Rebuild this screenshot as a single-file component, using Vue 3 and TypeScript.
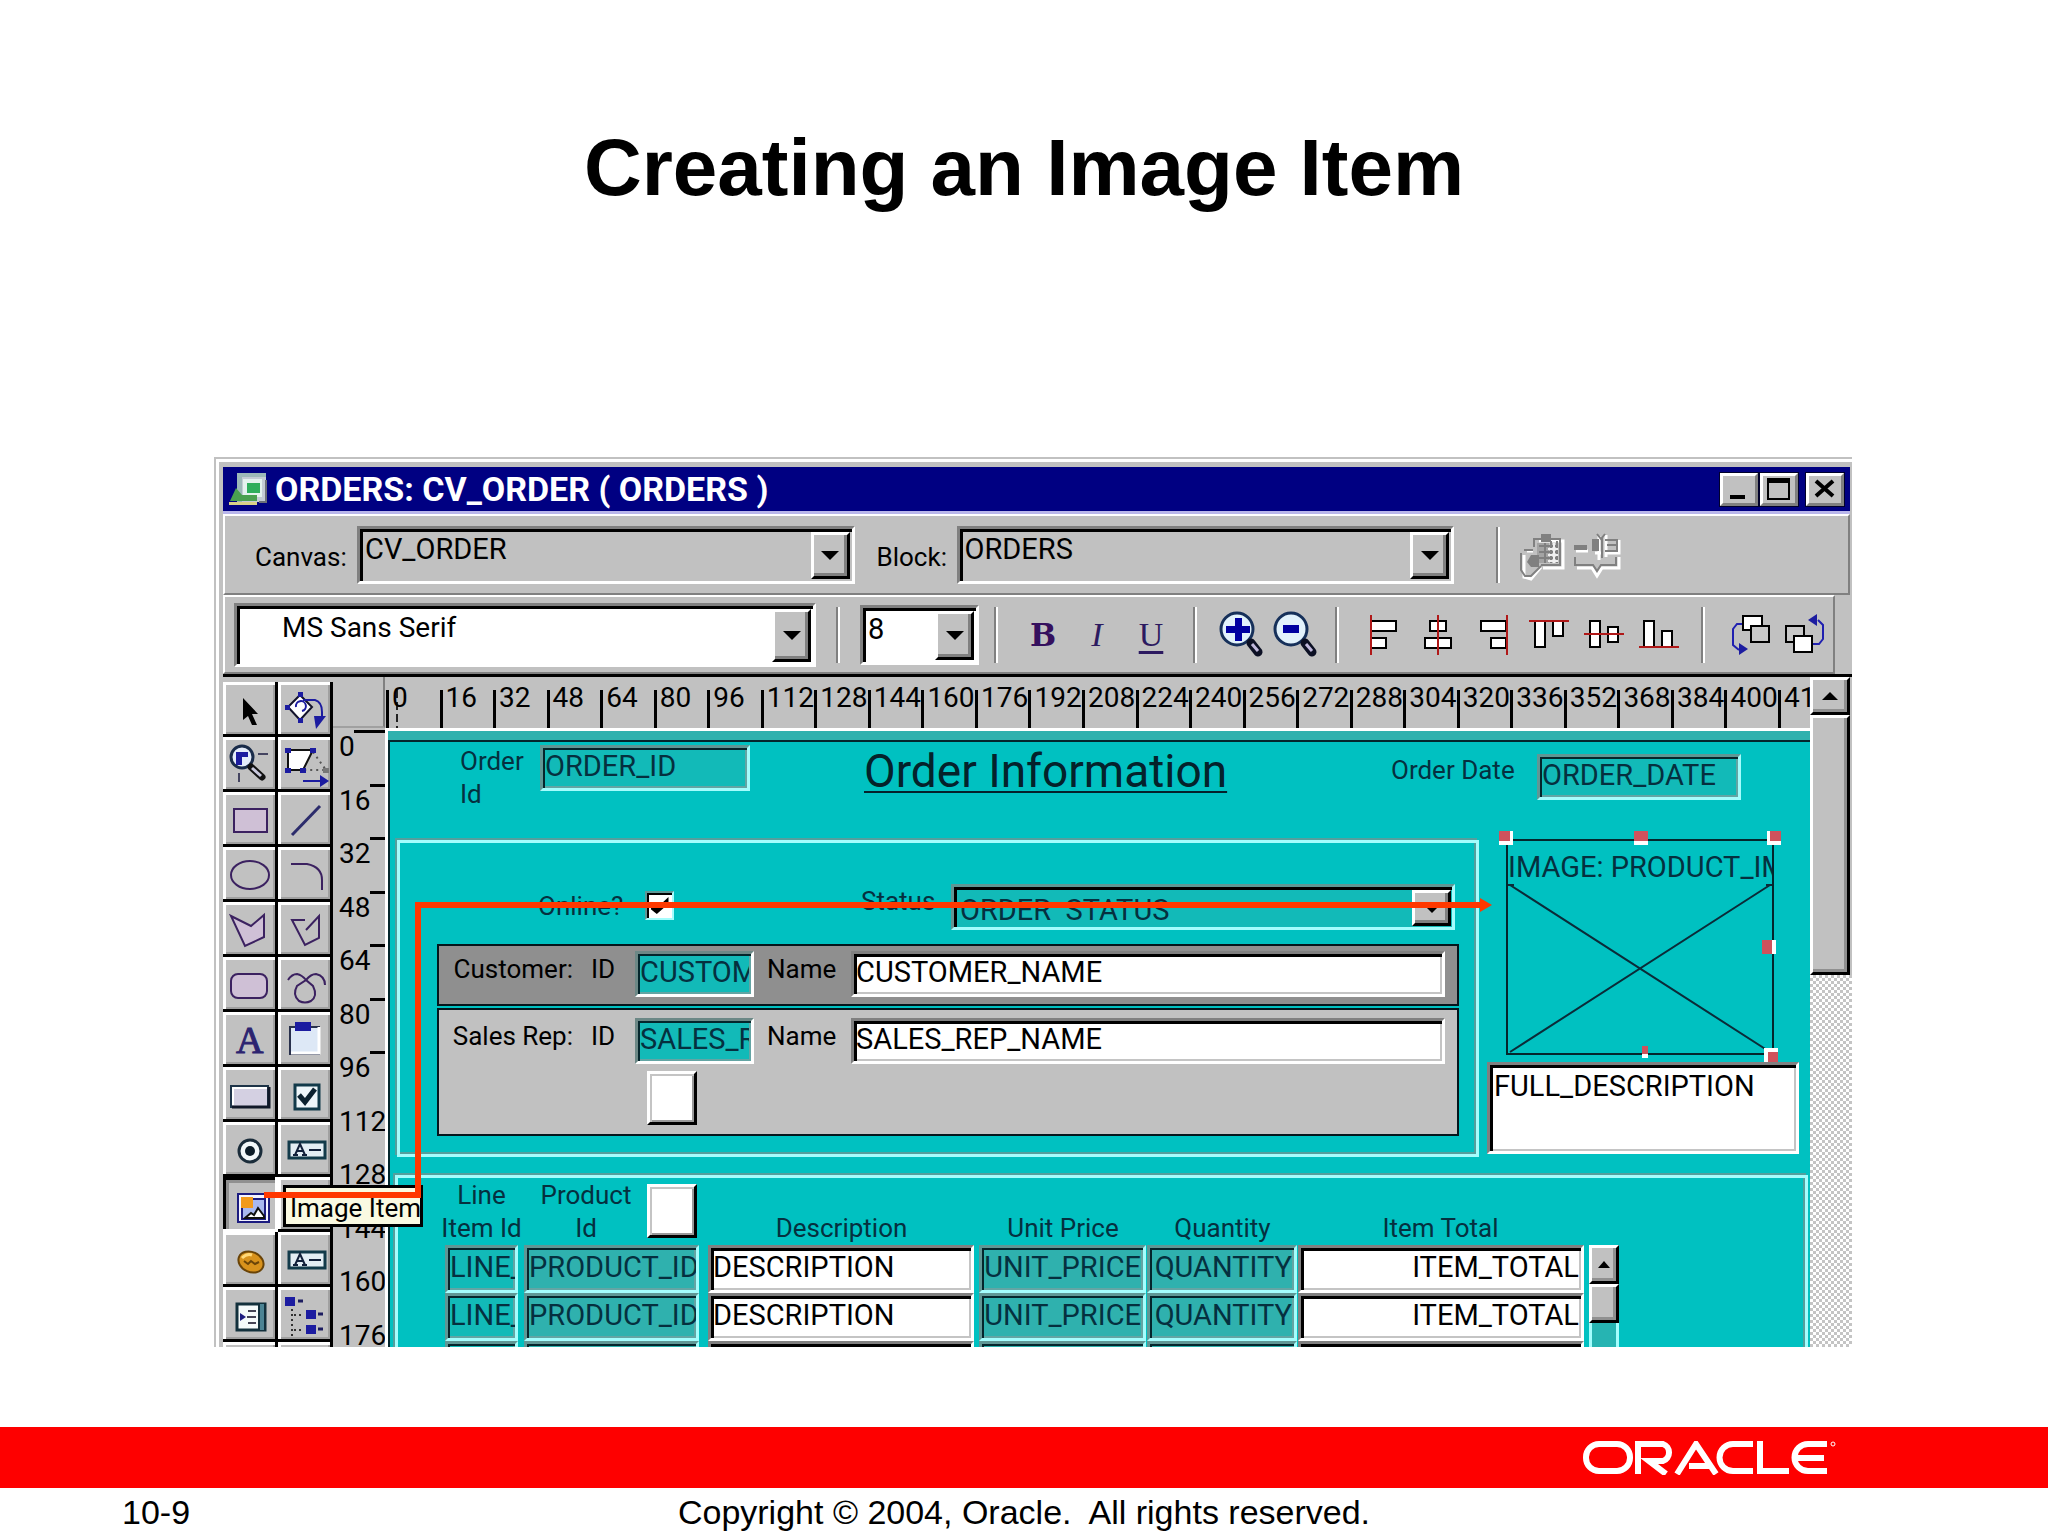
<script setup lang="ts">
import { ref } from 'vue'

interface Tool {
  name: string
  art: string
}

const ink = 'stroke="#3b2160" stroke-width="2"'
const textItem =
  '<rect x="11" y="19" width="36" height="16" fill="#e4eef4" stroke="#123a4a" stroke-width="3"/><path d="M17 32l5-11 5 11M19 28h6M15 32h5M24 32h5M31 27h12" fill="none" stroke="#12203a" stroke-width="2"/>'

const tools: Tool[] = [
  { name: 'Select', art: '<path d="M20 15v22l5-4 4 9h5l-5-11h6z" fill="#000"/>' },
  {
    name: 'Rotate',
    art: '<path d="M22 12L34 24 22 37 10 24z" fill="#fff" stroke="#12122a" stroke-width="2"/><path d="M18 24a5 5 0 1 1 6 4M25 17h12q7 2 7 12v8" fill="none" stroke="#1c1ca0" stroke-width="2"/><path d="M20 9h5v5h-5zM7 22h5v5H7zM20 35h5v5h-5z" fill="#1c1ca0"/><path d="M36 33h12L38 46z" fill="#1c1ca0"/>'
  },
  {
    name: 'Magnify',
    art: '<circle cx="19" cy="19" r="11" fill="#e4ecfa" stroke="#1a2c4a" stroke-width="3"/><path d="M13 14h12v5h-6v8h-6z" fill="#1c1ca0"/><path d="M28 29l11 10" stroke="#111" stroke-width="7" stroke-linecap="round"/><path d="M29 30l9 8" stroke="#c8c8dc" stroke-width="3"/><path d="M35 16h10M16 35v9" stroke="#444460" stroke-width="2"/>'
  },
  {
    name: 'Reshape',
    art: '<path d="M10 12h25L25 32H10z" fill="#fff" stroke="#111" stroke-width="2"/><path d="M35 14l13 18H28" fill="none" stroke="#555" stroke-width="2" stroke-dasharray="2 4"/><path d="M7 10h6v5H7zM32 10h6v5h-6zM7 30h6v5H7zM22 30h6v5h-6z" fill="#1c1ca0"/><path d="M45 30h6v5h-6z" fill="#777"/><path d="M25 43h18" stroke="#1c1ca0" stroke-width="2"/><path d="M42 37l9 6-9 6z" fill="#1c1ca0"/>'
  },
  { name: 'Rectangle', art: `<rect x="11" y="16" width="33" height="23" fill="#cfc0d6" ${ink}/>` },
  { name: 'Line', art: '<path d="M14 42L42 13" stroke="#2c2c6c" stroke-width="3"/>' },
  { name: 'Ellipse', art: `<ellipse cx="27" cy="27" rx="19" ry="14" fill="none" ${ink}/>` },
  { name: 'Arc', art: `<path d="M13 16h16q15 3 15 16v10" fill="none" ${ink}/>` },
  { name: 'Polygon', art: `<path d="M8 13l20 10 13-11v22l-19 9z" fill="#cfc0d6" ${ink}/>` },
  { name: 'Polyline', art: `<path d="M27 17H14l13 25 14-7V13L28 27" fill="none" ${ink}/>` },
  { name: 'Rounded Rectangle', art: `<rect x="8" y="16" width="36" height="24" rx="7" fill="#cfc0d6" ${ink}/>` },
  {
    name: 'Freehand',
    art: `<path d="M10 22q4-6 9-6 5 1 9 6l7 6q5 10-2 15-6 3-12 0-7-6-2-15l9-6q5-6 10-6 9 2 9 11" fill="none" ${ink}/>`
  },
  {
    name: 'Text',
    art: '<text x="13" y="40" font-family="Liberation Serif, serif" font-size="38" fill="#2c2470" stroke="#2c2470" stroke-width="1">A</text>'
  },
  {
    name: 'Frame',
    art: '<path d="M12 14h29v27H12z" fill="#dde8f6" stroke="#28304c" stroke-width="2"/><path d="M13 40h28V14" fill="none" stroke="#fff" stroke-width="3"/><path d="M17 9h16v9H17z" fill="#1c1ca0"/>'
  },
  {
    name: 'Button',
    art: '<path d="M8 18h37v21H8z" fill="#d4d0e2" stroke="#1e3448" stroke-width="2"/><path d="M10 37V20h34" fill="none" stroke="#fff" stroke-width="2"/><path d="M9 39h37V19" fill="none" stroke="#101828" stroke-width="3"/>'
  },
  {
    name: 'Check Box',
    art: '<rect x="17" y="17" width="24" height="24" fill="#eef6fa" stroke="#123a4a" stroke-width="3"/><path d="M21 27l6 7 10-13" fill="none" stroke="#0c2230" stroke-width="5"/>'
  },
  {
    name: 'Radio Button',
    art: '<circle cx="27" cy="28" r="11" fill="#f2f8fa" stroke="#1a2c3a" stroke-width="3"/><circle cx="27" cy="28" r="5" fill="#0c1c28"/>'
  },
  { name: 'Text Item', art: textItem },
  {
    name: 'Image Item',
    art: '<rect x="15" y="16" width="31" height="28" fill="#f4f4ff" stroke="#1c1c80" stroke-width="2"/><rect x="19" y="21" width="23" height="20" fill="#a8b8f0" stroke="#1c1c80" stroke-width="2"/><path d="M22 40l6-5 3 2 4-7 6 8v2z" fill="#fff" stroke="#111" stroke-width="2"/><path d="M18 19h12v11H18z" fill="#f29a1c"/>'
  },
  { name: 'Chart Item', art: '' },
  {
    name: 'Bean Area',
    art: '<ellipse cx="28" cy="29" rx="13" ry="10" transform="rotate(24 28 29)" fill="#d8921c" stroke="#6a4408" stroke-width="2"/><path d="M19 25q5-5 10-3" fill="none" stroke="#ffd878" stroke-width="3"/><path d="M21 28l4 3 3-3 4 3 4-2" fill="none" stroke="#6a4408" stroke-width="2"/>'
  },
  { name: 'Display Item', art: textItem },
  {
    name: 'List Item',
    art: '<path d="M14 16h28v26H14z" fill="#f4fafa" stroke="#12303c" stroke-width="3"/><path d="M36 16h5v26h-5z" fill="#4c8494"/><path d="M36 16v26" stroke="#12303c" stroke-width="2"/><path d="M17 25l6 4-6 4z" fill="#1c1c80"/><path d="M25 23h8M24 29h9M25 35h8" stroke="#445" stroke-width="2"/>'
  },
  {
    name: 'Hierarchical Tree',
    art: '<path d="M7 9h10v9H7zM28 22h10v9H28zM28 37h10v9H28z" fill="#1c1ca0"/><path d="M20 13h5M40 26h5M40 41h5" stroke="#1c1c60" stroke-width="3"/><path d="M14 21v27M16 27h10M16 42h10" fill="none" stroke="#333" stroke-width="2" stroke-dasharray="2 3"/>'
  }
]

const alignments: Tool[] = [
  {
    name: 'Align Left',
    art: '<path d="M14 18h25v10H14zM14 35h15v10H14z" fill="#fff" stroke="#000" stroke-width="2"/><path d="M14 12v40" stroke="#b01818" stroke-width="2"/>'
  },
  {
    name: 'Align Center',
    art: '<path d="M19 18h16v10H19zM14 35h26v10H14z" fill="#fff" stroke="#000" stroke-width="2"/><path d="M27 12v40" stroke="#b01818" stroke-width="2"/>'
  },
  {
    name: 'Align Right',
    art: '<path d="M16 18h25v10H16zM26 35h15v10H26z" fill="#fff" stroke="#000" stroke-width="2"/><path d="M42 12v40" stroke="#b01818" stroke-width="2"/>'
  },
  {
    name: 'Align Top',
    art: '<path d="M16 18h10v26H16zM34 18h10v15H34z" fill="#fff" stroke="#000" stroke-width="2"/><path d="M10 18h40" stroke="#b01818" stroke-width="2"/>'
  },
  {
    name: 'Align Middle',
    art: '<path d="M17 18h10v26H17zM35 24h10v15H35z" fill="#fff" stroke="#000" stroke-width="2"/><path d="M11 31h40" stroke="#b01818" stroke-width="2"/>'
  },
  {
    name: 'Align Bottom',
    art: '<path d="M17 18h10v26H17zM35 28h10v16H35z" fill="#fff" stroke="#000" stroke-width="2"/><path d="M12 44h40" stroke="#b01818" stroke-width="2"/>'
  }
]

const lens =
  '<circle cx="21" cy="24" r="16" fill="#e2f2fc" stroke="#16305a" stroke-width="3"/><path d="M35 38l7 9" stroke="#0c1024" stroke-width="9" stroke-linecap="round"/><path d="M36 39l6 7" stroke="#c0b8dc" stroke-width="3"/>'
const zooms: Tool[] = [
  { name: 'Zoom In', art: lens + '<path d="M10 21h9v-8h7v8h8v7h-8v8h-7v-8h-9z" fill="#0000a0"/>' },
  { name: 'Zoom Out', art: lens + '<path d="M13 20h16v8H13z" fill="#0000a0"/>' }
]

const arrange: Tool[] = [
  {
    name: 'Bring to Front',
    art: '<path d="M18 13h19v14H18z" fill="#fff" stroke="#000" stroke-width="2"/><path d="M26 23h18v16H26z" fill="#c8c8c8" stroke="#000" stroke-width="2"/><path d="M17 21h-5l-4 5v16l6 5" fill="none" stroke="#2020b0" stroke-width="2"/><path d="M14 40l9 6-9 6z" fill="#1c1ca0"/>'
  },
  {
    name: 'Send to Back',
    art: '<path d="M7 23h18v16H7z" fill="#c8c8c8" stroke="#000" stroke-width="2"/><path d="M15 33h18v16H15z" fill="#fff" stroke="#000" stroke-width="2"/><path d="M34 41h6l4-5V22l-5-5" fill="none" stroke="#2020b0" stroke-width="2"/><path d="M38 11l-9 6 9 6z" fill="#1c1ca0"/>'
  }
]

const acrossMarks = Array.from({ length: 26 }, (_, i) => String(i * 16)).concat('41')
const downMarks = Array.from({ length: 12 }, (_, i) => i * 16)

const columns = [
  { key: 'line', head: ['Line', 'Item Id'], value: 'LINE_ITEM' },
  { key: 'product', head: ['Product', 'Id'], value: 'PRODUCT_ID' },
  { key: 'description', head: ['Description'], value: 'DESCRIPTION' },
  { key: 'price', head: ['Unit Price'], value: 'UNIT_PRICE' },
  { key: 'quantity', head: ['Quantity'], value: 'QUANTITY' },
  { key: 'total', head: ['Item Total'], value: 'ITEM_TOTAL' }
]

const handles = ['nw', 'n', 'ne', 'e', 's', 'se']
const online = ref(true)
const activeTool = ref('Image Item')
</script>

<template>
  <main class="slide">
    <h1>Creating an Image Item</h1>

    <section class="window">
      <div class="window-inner">
        <header class="title-bar">
          <svg class="app-icon" viewBox="0 0 39 34" aria-hidden="true">
            <path d="M9 1h29v29H9z" fill="#c4ccd4" />
            <path d="M9 1h29v4H14v25H9z" fill="#9cb8b8" />
            <path d="M15 7h19v18H15z" fill="#e4f2ee" />
            <path d="M19 11h13v10H19z" fill="#2fae5c" />
            <path d="M8 16l-6 13h27v-6H14z" fill="#4aa050" />
            <path d="M1 30h28v3H1z" fill="#d8d088" />
            <path d="M31 30h7V8" fill="none" stroke="#6c7078" stroke-width="2" />
          </svg>
          <h2 class="title">ORDERS: CV_ORDER ( ORDERS )</h2>
          <button class="win-btn" type="button" aria-label="Minimize">
            <svg viewBox="0 0 32 26"><path d="M7 19h15v4H7z" /></svg>
          </button>
          <button class="win-btn" type="button" aria-label="Maximize">
            <svg viewBox="0 0 32 26"><path d="M4 2h23v22H4zM6 7v15h19V7z" fill-rule="evenodd" /></svg>
          </button>
          <button class="win-btn close" type="button" aria-label="Close">
            <svg viewBox="0 0 32 26"><path d="M7 5l17 15M24 5L7 20" stroke="#000" stroke-width="4" /></svg>
          </button>
        </header>

        <div class="bar bar-canvas">
          <label class="bar-label" for="canvas">Canvas:</label>
          <div class="combo">
            <select id="canvas"><option>CV_ORDER</option></select>
            <span class="drop" aria-hidden="true"></span>
          </div>
          <label class="bar-label" for="block">Block:</label>
          <div class="combo">
            <select id="block"><option>ORDERS</option></select>
            <span class="drop" aria-hidden="true"></span>
          </div>
          <div class="bar-end">
            <span class="sep"></span>
            <button class="flat" type="button" disabled aria-label="Layout Wizard">
              <svg viewBox="0 0 54 60">
                <g fill="none" stroke="#fff" stroke-width="3">
                  <path d="M24 16h24v27H28M12 26h6M9 30v22l7 2 10-12" />
                </g>
                <path d="M26 9h10v8H26z" fill="#808080" />
                <path d="M19 22v-8h26v26H26M9 25h9M6 28v17l4 6h6l10-10" fill="none" stroke="#808080" stroke-width="2" />
                <path d="M22 18h12v20H22z" fill="#a4a4a4" />
                <path d="M24 21h19M24 27h19M24 33h19M30 18v20M36 16v22M42 16v22" stroke="#808080" stroke-width="2" />
                <path d="M33 24h10M33 30h10M33 36h10M39 18v20" stroke="#f0f0f0" stroke-width="2" />
                <path d="M16 30h8v12h-8l-4-5z" fill="#808080" />
              </svg>
            </button>
            <button class="flat" type="button" disabled aria-label="Update Layout">
              <svg viewBox="0 0 54 60">
                <path d="M7 26h12M26 28h8M38 28h12V15M8 43h15l5 8 5-8h17V32M30 11v24M37 10v22" fill="none" stroke="#fff" stroke-width="3" />
                <path d="M5 20h13v5H5zM23 14h7v12h-7z" fill="#808080" />
                <path d="M36 15h12v11H36M38 20h10M6 32v8h18l4 6 4-6h15v-8M28 9l4 5 4-5M33 13v20" fill="none" stroke="#808080" stroke-width="2" />
              </svg>
            </button>
          </div>
        </div>

        <div class="bar bar-format">
          <div class="combo white">
            <select id="font" class="indent" aria-label="Font"><option>MS Sans Serif</option></select>
            <span class="drop" aria-hidden="true"></span>
          </div>
          <span class="sep wide"></span>
          <div class="combo white size">
            <select id="size" aria-label="Font size"><option>8</option></select>
            <span class="drop" aria-hidden="true"></span>
          </div>
          <span class="sep mid"></span>
          <button class="flat glyph bold" type="button" aria-label="Bold">B</button>
          <button class="flat glyph italic" type="button" aria-label="Italic">I</button>
          <button class="flat glyph underline" type="button" aria-label="Underline">U</button>
          <span class="sep"></span>
          <button v-for="z in zooms" :key="z.name" class="flat" type="button" :aria-label="z.name">
            <svg viewBox="-4 0 54 60" v-html="z.art"></svg>
          </button>
          <span class="sep mid"></span>
          <button v-for="a in alignments" :key="a.name" class="flat" type="button" :aria-label="a.name">
            <svg viewBox="0 2 54 60" v-html="a.art"></svg>
          </button>
          <span class="sep wide"></span>
          <button v-for="a in arrange" :key="a.name" class="flat" type="button" :aria-label="a.name">
            <svg viewBox="0 2 54 60" v-html="a.art"></svg>
          </button>
        </div>

        <div class="work">
          <div class="palette">
            <button
              v-for="tool in tools"
              :key="tool.name"
              class="tool"
              :class="{ pressed: tool.name === activeTool }"
              type="button"
              :aria-label="tool.name"
              @click="activeTool = tool.name"
            >
              <svg viewBox="3 2 49 49" v-html="tool.art"></svg>
            </button>
            <span class="tool"></span>
            <span class="tool"></span>
          </div>

          <div class="editor">
            <div class="corner"></div>
            <div class="ruler-x">
              <span v-for="m in acrossMarks" :key="m" class="mark-x">{{ m }}</span>
            </div>
            <div class="ruler-y">
              <span v-for="m in downMarks" :key="m" class="mark-y" :class="{ long: m === 0, ticked: m < 100 }">{{ m }}</span>
            </div>

            <div class="canvas">
              <form class="page" @submit.prevent>
                <div class="heading">
                  <label class="order-id" for="order-id">Order Id</label>
                  <input id="order-id" class="field w-order" value="ORDER_ID" />
                  <h3>Order Information</h3>
                  <div class="date">
                    <label for="order-date">Order Date</label>
                    <input id="order-date" class="field w-date" value="ORDER_DATE" />
                  </div>
                </div>

                <div class="middle">
                  <div class="frame order-frame">
                    <div class="status-row">
                      <label class="online" for="online">Online?</label>
                      <input id="online" v-model="online" class="check" type="checkbox" />
                      <label class="status" for="status">Status</label>
                      <div class="combo teal">
                        <select id="status"><option>ORDER&nbsp; STATUS</option></select>
                        <span class="drop" aria-hidden="true"></span>
                      </div>
                    </div>
                    <div class="person dark">
                      <label class="who" for="cust-id">Customer:</label>
                      <label for="cust-id">ID</label>
                      <input id="cust-id" class="field" value="CUSTOMER_ID" />
                      <label class="name" for="cust-name">Name</label>
                      <input id="cust-name" class="field white" value="CUSTOMER_NAME" />
                    </div>
                    <div class="person light">
                      <label class="who" for="rep-id">Sales Rep:</label>
                      <label for="rep-id">ID</label>
                      <input id="rep-id" class="field" value="SALES_REP_ID" />
                      <label class="name" for="rep-name">Name</label>
                      <input id="rep-name" class="field white" value="SALES_REP_NAME" />
                      <button class="blank rep-list" type="button" aria-label="List sales reps"></button>
                    </div>
                  </div>

                  <div class="picture-col">
                    <div class="image-item">
                      <span class="image-label">IMAGE: PRODUCT_IMAGE</span>
                      <svg class="cross" viewBox="0 0 264 169" preserveAspectRatio="none" aria-hidden="true">
                        <path d="M0 1h6M258 1h6M2 1l260 167M262 1L2 168" fill="none" stroke="#0b2b38" stroke-width="2" />
                      </svg>
                      <i v-for="h in handles" :key="h" class="handle" :class="h"></i>
                    </div>
                    <textarea class="field white full" aria-label="Full description">FULL_DESCRIPTION</textarea>
                  </div>
                </div>

                <div class="frame lines-frame">
                  <div class="lines">
                    <table>
                      <colgroup>
                        <col v-for="c in columns" :key="c.key" :class="'c-' + c.key" />
                      </colgroup>
                      <thead>
                        <tr>
                          <th v-for="c in columns" :key="c.key" :class="'h-' + c.key" scope="col">
                            <div class="head">
                              <span><template v-for="(part, i) in c.head" :key="part"><br v-if="i" />{{ part }}</template></span>
                              <button v-if="c.key === 'product'" class="blank" type="button" aria-label="List products"></button>
                            </div>
                          </th>
                        </tr>
                      </thead>
                      <tbody>
                        <tr v-for="row in 3" :key="row">
                          <td v-for="c in columns" :key="c.key" :class="'d-' + c.key">
                            <div class="field cell" :class="{ white: c.key === 'description' || c.key === 'total' }">
                              <span>{{ row < 3 ? c.value : '' }}</span>
                            </div>
                          </td>
                        </tr>
                      </tbody>
                    </table>
                  </div>
                  <div class="mini-scroll">
                    <button class="arrow-up" type="button" aria-label="Previous record"></button>
                    <div class="thumb"></div>
                    <div class="mini-track"></div>
                  </div>
                </div>
              </form>
            </div>
          </div>

          <div class="scroll">
            <button class="arrow-up" type="button" aria-label="Scroll up"></button>
            <div class="thumb"></div>
            <div class="track"></div>
          </div>
        </div>
      </div>

      <div class="tooltip" role="tooltip">Image Item</div>
      <i class="run start"></i>
      <i class="run rise"></i>
      <i class="run across"></i>
      <svg class="arrow-head" viewBox="0 0 12 14" aria-hidden="true"><path d="M0 0l12 7-12 7z" fill="#ff3800" /></svg>
    </section>

    <footer>
      <div class="brand">
        <svg class="logo" viewBox="0 0 256 34" role="img" aria-label="Oracle">
          <g fill="none" stroke="#fff" stroke-width="6">
            <rect x="3" y="3" width="44" height="27" rx="13" />
            <path d="M55 33V3h25a9 9 0 0 1 0 17H66l17 13" />
            <path d="M94 33l19-30 20 30M106 25h22" />
            <path d="M170 3h-20a13 13 0 0 0 0 27h20" />
            <path d="M177 0v30h29" />
            <path d="M244 3h-19a13 13 0 0 0 0 27h19M210 17h31" />
          </g>
          <circle cx="250" cy="3" r="2" fill="none" stroke="#fff" stroke-width="1" />
        </svg>
      </div>
      <div class="caption">
        <span class="page-no">10-9</span>
        <span class="copy">Copyright © 2004, Oracle.&nbsp; All rights reserved.</span>
      </div>
    </footer>
  </main>
</template>

<style>
body {
  background: #fff;
}
</style>

<style scoped>
* {
  box-sizing: border-box;
}

.slide {
  --face: #c1c1c1;
  --shade: #808080;
  --teal: #00c1c1;
  --dull: #2fb1ae;
  --glow: #a4fdfd;
  --ink: #05303f;
  min-height: 100vh;
  display: flex;
  flex-direction: column;
  overflow: hidden;
  font-family: "Liberation Sans", Arial, sans-serif;
  color: #000;
}

h1 {
  margin: 122px 0 243px;
  text-align: center;
  font-size: 80px;
  line-height: 92px;
  font-weight: bold;
}

button,
input,
select,
textarea {
  font: inherit;
  color: inherit;
  margin: 0;
  border-radius: 0;
}

/* ---------- window chrome ---------- */
.window {
  position: relative;
  margin: 0 196px 0 214px;
  border-top: 2px solid var(--face);
  border-left: 2px solid var(--face);
  background: var(--face);
  font-family: Roboto, "Liberation Sans", sans-serif;
  font-size: 26px;
  line-height: 33px;
}

.window-inner {
  border-top: 3px solid #fff;
  border-left: 3px solid #fff;
  padding: 5px 0 0 4px;
}

.title-bar {
  display: flex;
  align-items: center;
  height: 47px;
  margin-right: 2px;
  padding: 0 6px 0 5px;
  background: #000082;
  border-bottom: 3px solid #b9b6ea;
  color: #fff;
}

.app-icon {
  width: 39px;
  height: 34px;
}

.title {
  flex: 1;
  margin: 0 0 0 8px;
  font-size: 34px;
  line-height: 40px;
  font-weight: 700;
  white-space: pre;
}

.win-btn {
  width: 38px;
  height: 33px;
  margin-left: 2px;
  padding: 0;
  background: var(--face);
  border: 3px solid;
  border-color: #fff var(--shade) var(--shade) #fff;
  outline: 1px solid #00002a;
  outline-offset: 0;
}

.win-btn svg {
  display: block;
  width: 32px;
  height: 26px;
}

.win-btn.close {
  margin-left: 8px;
}

.bar {
  display: flex;
  align-items: center;
  border: 2px solid;
  border-color: #fff var(--shade) var(--shade) #fff;
  background: var(--face);
}

.bar-canvas {
  height: 81px;
  margin-right: 2px;
}

.bar-format {
  height: 79px;
  margin-right: 17px;
  padding-left: 9px;
}

.bar-label {
  flex: 0 0 102px;
  padding-left: 22px;
  padding-top: 6px;
}

.bar-label:first-child {
  flex-basis: 132px;
  padding-left: 30px;
}

.bar-end {
  display: flex;
  align-items: center;
  flex: 0 0 394px;
  padding-left: 27px;
}

.combo {
  flex: 1;
  display: flex;
  min-width: 0;
  height: 58px;
  padding: 3px 2px 2px 3px;
  border: 3px solid;
  border-color: var(--shade) #fff #fff var(--shade);
  box-shadow: inset 3px 3px 0 #000;
}

.combo.white {
  height: 64px;
  background: #fff;
}

.combo.size {
  flex: 0 0 119px;
  height: 60px;
}

.combo select {
  flex: 1;
  min-width: 0;
  appearance: none;
  border: 0;
  background: transparent;
  padding: 0 0 12px 2px;
  font-size: 29px;
  line-height: 34px;
}

.combo select.indent {
  padding-left: 42px;
  padding-bottom: 14px;
  font-size: 28px;
}

.drop {
  flex: 0 0 39px;
  display: flex;
  align-items: center;
  justify-content: center;
  background: var(--face);
  border: 3px solid;
  border-color: #fff #000 #000 #fff;
  box-shadow: inset -3px -3px 0 var(--shade);
}

.drop::before {
  content: "";
  border: 9px solid transparent;
  border-top-color: #000;
  border-bottom-width: 0;
}

.sep {
  flex: none;
  width: 4px;
  height: 56px;
  margin: 0 15px;
  border-left: 2px solid var(--shade);
  border-right: 2px solid #fff;
}

.sep.mid {
  margin-right: 18px;
}

.sep.wide {
  margin: 0 20px;
}

.flat {
  flex: none;
  width: 54px;
  height: 60px;
  padding: 0;
  border: 0;
  background: transparent;
}

.flat svg {
  display: block;
  width: 54px;
  height: 60px;
}

.glyph {
  font-family: "Liberation Serif", "Times New Roman", serif;
  font-size: 34px;
  line-height: 60px;
  color: #2c1a60;
}

.bold {
  font-family: "DejaVu Serif", serif;
  font-size: 31px;
  font-weight: bold;
  color: #35105e;
}

.italic {
  font-style: italic;
}

.underline {
  text-decoration: underline 3px;
  text-underline-offset: 5px;
}

/* ---------- work area ---------- */
.work {
  display: flex;
  height: 673px;
  border-top: 3px solid #000;
  overflow: hidden;
}

.palette {
  flex: 0 0 110px;
  display: grid;
  grid-template-columns: 55px 55px;
  grid-auto-rows: 55px;
  padding-top: 5px;
}

.tool {
  padding: 0;
  border: 0;
  border-right: 3px solid #000;
  border-bottom: 3px solid #000;
  background: var(--face);
  box-shadow: inset 3px 3px 0 #fff, inset -2px -2px 0 #a0a0a0;
}

.tool svg {
  display: block;
  width: 49px;
  height: 49px;
  margin: 2px 0 0 3px;
}

.tool.pressed {
  border-right-color: #fff;
  border-bottom-color: #fff;
  box-shadow: inset 3px 3px 0 #000, inset 6px 6px 0 #909090;
}

.editor {
  flex: 1;
  min-width: 0;
  display: grid;
  grid-template-columns: 52px minmax(0, 1fr);
  grid-template-rows: 51px 619px;
}

.corner {
  border-right: 2px solid var(--shade);
  border-bottom: 2px solid #a0a0a0;
}

.ruler-x {
  display: grid;
  grid-template-columns: repeat(26, minmax(0, 1fr)) 32px;
  padding: 13px 0 0 1px;
  overflow: hidden;
  font-size: 28px;
  line-height: 16px;
}

.mark-x {
  border-left: 3px solid #000;
  padding-left: 3px;
}

.mark-x:first-child {
  background: repeating-linear-gradient(#222 0 8px, transparent 8px 12px) 7px 0 / 2px 100% no-repeat;
}

.ruler-y {
  display: grid;
  grid-auto-rows: 54px 53px;
  padding-top: 2px;
  overflow: hidden;
  font-size: 28px;
  line-height: 34px;
}

.mark-y {
  position: relative;
  padding-left: 6px;
}

.ticked::before {
  content: "";
  position: absolute;
  top: 0;
  right: 0;
  width: 16px;
  height: 3px;
  background: #000;
}

.long::before {
  width: 32px;
}

.canvas {
  border: 3px solid #fff;
  border-width: 3px 0 0 3px;
  padding-top: 9px;
  background: var(--dull);
  overflow: hidden;
}

.page {
  height: 620px;
  border: 2px solid #04262c;
  border-width: 2px 0 0 2px;
  background: var(--teal);
  color: var(--ink);
}

/* ---------- form fields ---------- */
.field {
  min-width: 0;
  height: 46px;
  padding: 0 2px 4px 2px;
  border: 3px solid;
  border-color: #5f9795 var(--glow) var(--glow) #5f9795;
  box-shadow: inset 2px 2px 0 #04262c, inset -2px -2px 0 #63a5a4;
  background: #12bab8;
  font-size: 29px;
  line-height: 34px;
}

.field.white {
  background: #fff;
  color: #000;
  border-color: var(--shade) #fff #fff var(--shade);
  box-shadow: inset 3px 3px 0 #000, inset -2px -2px 0 #c4c4c4;
}

.heading {
  display: flex;
  align-items: flex-start;
  height: 98px;
  padding: 3px 69px 0 70px;
}

.order-id {
  width: 70px;
  margin-right: 10px;
}

.w-order {
  width: 210px;
}

h3 {
  margin: 0 auto 0 114px;
  font-size: 46px;
  line-height: 52px;
  font-weight: 400;
  color: #04222b;
  text-decoration: underline 2px;
  text-underline-offset: 4px;
}

.date {
  display: flex;
  margin-top: 9px;
}

.date label {
  width: 146px;
  white-space: nowrap;
}

.w-date {
  width: 204px;
}

.middle {
  display: flex;
  padding-left: 7px;
}

.frame {
  border: 3px solid var(--glow);
  box-shadow: -2px -2px 0 #549f9d, inset -2px -2px 0 #549f9d;
}

.order-frame {
  flex: 1;
  min-width: 0;
  height: 317px;
}

.status-row {
  display: flex;
  align-items: flex-start;
  padding: 41px 21px 14px 138px;
}

.online {
  width: 107px;
  margin-top: 6px;
}

.check {
  appearance: none;
  width: 29px;
  height: 29px;
  margin-top: 7px;
  border: 2px solid;
  border-color: #5f9795 var(--glow) var(--glow) #5f9795;
  box-shadow: inset 2px 2px 0 #000;
  background: #fff;
  display: grid;
  place-items: center;
}

.check:checked::before {
  content: "";
  width: 18px;
  height: 17px;
  background: #000;
  clip-path: polygon(0 35%, 35% 65%, 100% 0, 100% 40%, 35% 100%, 0 70%);
}

.status {
  width: 90px;
  margin: 1px 0 0 187px;
}

.combo.teal {
  height: 46px;
  padding: 3px 1px 1px 3px;
  background: #12bab8;
  border-color: #5f9795 var(--glow) var(--glow) #5f9795;
}

.combo.teal select {
  padding: 3px 0 0 3px;
}

.person {
  display: grid;
  grid-template-columns: 152px 44px 119px 97px minmax(0, 1fr);
  align-items: start;
  align-content: start;
  margin: 0 17px 2px 37px;
  padding: 5px 12px 0 0;
  border: 2px solid #04161c;
  color: #000;
}

.person.dark {
  height: 62px;
  background: #8f8f8f;
}

.person.light {
  height: 128px;
  padding-top: 8px;
  background: var(--face);
}

.person label {
  padding-top: 2px;
}

.person .who {
  padding-right: 18px;
  text-align: right;
}

.person .name {
  padding-left: 13px;
}

.person .field {
  width: 100%;
}

.person .field:not(.white) {
  color: var(--ink);
  border-color: #6c8886 #fff #fff #6c8886;
}

.blank {
  width: 50px;
  height: 54px;
  padding: 0;
  background: #fff;
  border: 3px solid;
  border-color: #fff #000 #000 #fff;
  box-shadow: inset 2px 2px 0 #c4c4c4, inset -2px -2px 0 #9a9a9a;
}

.rep-list {
  grid-column: 2 / 4;
  margin: 7px 0 0 56px;
}

.picture-col {
  flex: 0 0 331px;
  padding-left: 8px;
}

.image-item {
  position: relative;
  width: 268px;
  height: 216px;
  margin: -1px 0 7px 19px;
  padding-top: 10px;
  border: 2px solid #04262c;
}

.image-label {
  display: block;
  height: 33px;
  overflow: hidden;
  white-space: nowrap;
  font-size: 29px;
  line-height: 33px;
}

.cross {
  display: block;
  width: 264px;
  height: 169px;
}

.handle {
  position: absolute;
  width: 14px;
  height: 14px;
  background: #cf525c;
  border: 0 solid #fff;
}

.nw {
  top: -10px;
  left: -9px;
  border-width: 0 3px 4px 0;
}

.n {
  top: -10px;
  left: 126px;
  border-bottom-width: 4px;
}

.ne {
  top: -10px;
  right: -9px;
  border-width: 0 0 4px 3px;
}

.e {
  top: 99px;
  right: -4px;
  border-right-width: 4px;
}

.s {
  bottom: -5px;
  left: 134px;
  width: 6px;
  height: 12px;
  border-bottom-width: 4px;
}

.se {
  bottom: -9px;
  right: -6px;
  border-width: 4px 0 0 4px;
}

.full {
  display: block;
  width: 312px;
  height: 92px;
  padding: 4px 4px;
  resize: none;
  overflow: hidden;
}

.lines-frame {
  display: flex;
  height: 200px;
  margin: 18px 2px 0 5px;
  padding: 0 186px 0 47px;
}

.lines {
  flex: 1;
  min-width: 0;
}

table {
  width: 100%;
  table-layout: fixed;
  border-collapse: collapse;
}

.c-line {
  width: 79px;
}

.c-product {
  width: 184px;
}

.c-price {
  width: 168px;
}

.c-quantity {
  width: 151px;
}

.c-total {
  width: 291px;
}

th,
td {
  padding: 0;
}

th {
  height: 67px;
  vertical-align: bottom;
  font-weight: 400;
}

.head {
  display: flex;
  justify-content: center;
  align-items: flex-end;
  height: 67px;
  white-space: nowrap;
}

.h-line .head {
  padding-right: 6px;
}

.h-total .head {
  padding-right: 6px;
}

.h-description .head {
  padding-right: 4px;
}

.h-product .head {
  justify-content: flex-start;
  padding-left: 16px;
}

.head .blank {
  margin: 0 0 7px 15px;
}

.head span {
  display: block;
}

.h-product span {
  width: 92px;
}

td {
  height: 48px;
}

.cell {
  display: flex;
  align-items: center;
  height: 48px;
  margin-right: 1px;
  overflow: hidden;
  background: var(--dull);
}

.d-line .cell {
  margin-right: 6px;
  background: #12bab8;
}

.d-product .cell {
  margin-right: 9px;
}

.d-description .cell,
.d-total .cell {
  margin-right: 5px;
}

.d-price .cell,
.d-quantity .cell,
.d-total .cell {
  justify-content: flex-end;
}

.mini-scroll {
  flex: 0 0 30px;
  display: flex;
  flex-direction: column;
  padding-top: 67px;
}

.arrow-up {
  flex: none;
  display: flex;
  align-items: center;
  justify-content: center;
  padding: 0;
  background: var(--face);
  border: 3px solid;
  border-color: #fff #000 #000 #fff;
  box-shadow: inset -3px -3px 0 #909090;
}

.arrow-up::before {
  content: "";
  border: 8px solid transparent;
  border-bottom-color: #000;
  border-top-width: 0;
}

.thumb {
  flex: none;
  background: var(--face);
  border: 3px solid;
  border-color: #fff #000 #000 #fff;
  box-shadow: inset -3px -3px 0 #909090;
}

.mini-scroll .arrow-up,
.mini-scroll .thumb {
  height: 39px;
}

.mini-scroll .arrow-up::before {
  border-width: 0 6px 7px;
}

.mini-track {
  flex: 1;
  border: solid var(--glow);
  border-width: 0 3px;
  background: #26b4b2;
}

.scroll {
  flex: 0 0 42px;
  display: flex;
  flex-direction: column;
}

.scroll .arrow-up {
  width: 40px;
  height: 38px;
}

.scroll .thumb {
  width: 40px;
  height: 260px;
}

.track {
  flex: 1;
  background: repeating-conic-gradient(#c4c4c4 0 25%, #fff 0 50%) 0 0 / 6px 6px;
}

/* ---------- callout ---------- */
.tooltip {
  position: absolute;
  left: 67px;
  top: 726px;
  width: 140px;
  height: 42px;
  padding: 4px 0 0 4px;
  border: 3px solid #000;
  background: #fafae2;
  color: #000;
  line-height: 33px;
  white-space: nowrap;
}

.run {
  position: absolute;
  background: #ff3800;
}

.start {
  left: 48px;
  top: 733px;
  width: 157px;
  height: 6px;
}

.rise {
  left: 199px;
  top: 443px;
  width: 6px;
  height: 296px;
}

.across {
  left: 199px;
  right: 370px;
  top: 443px;
  height: 6px;
}

.arrow-head {
  position: absolute;
  right: 360px;
  top: 439px;
  width: 12px;
  height: 14px;
}

/* ---------- footer ---------- */
footer {
  margin-top: 80px;
}

.brand {
  display: flex;
  justify-content: flex-end;
  align-items: center;
  height: 61px;
  padding-right: 209px;
  background: #fe0000;
}

.logo {
  width: 256px;
  height: 34px;
}

.caption {
  display: grid;
  grid-template-columns: 1fr auto 1fr;
  height: 48px;
  font-size: 34px;
  line-height: 48px;
}

.page-no {
  padding-left: 122px;
}
</style>
